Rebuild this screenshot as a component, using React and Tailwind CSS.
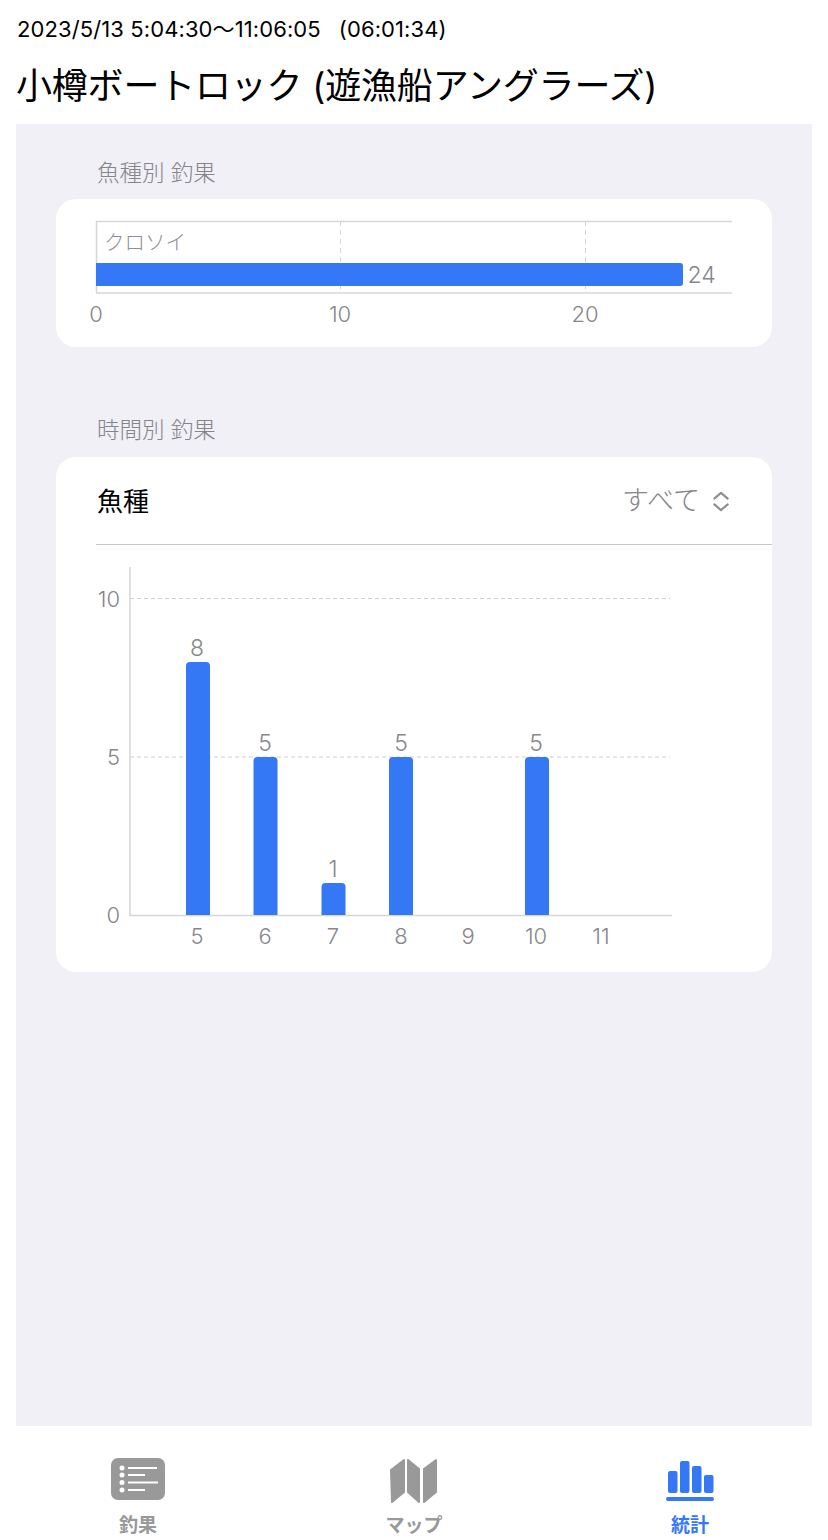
const blue = '#3478f6'
const gray = '#86868b'
const font = 'Inter, "Noto Sans CJK JP", sans-serif'

function SpeciesChart() {
  return (
    <svg viewBox="56 199 716 148" className="block h-[148px] w-full" style={{ fontFamily: font }}>
      <path d="M96 221.5H732M96 293H732" stroke="#d6d6d8" strokeWidth="1.5" fill="none" />
      <path d="M96.5 221V293" stroke="#d6d6d8" strokeWidth="1.5" fill="none" />
      <path d="M340.5 221V293M585.5 221V293" stroke="#d6d6d8" strokeWidth="1" strokeDasharray="5 4" fill="none" />
      <path d="M96 263H680a3 3 0 0 1 3 3V283a3 3 0 0 1 -3 3H96Z" fill={blue} />
      <text x="104" y="250" fontSize="20.5" fontWeight="300" fill="#8e8e93">クロソイ</text>
      <text x="687.5" y="283" fontSize="23" fontWeight="300" fill={gray}>24</text>
      {[[96, '0'], [340, '10'], [585, '20']].map(([x, t]) => (
        <text key={t} x={x} y="322" fontSize="22" fontWeight="300" fill={gray} textAnchor="middle">{t}</text>
      ))}
    </svg>
  )
}

const bars = [
  { x: 198, labelX: 197, top: 662, label: '8' },
  { x: 265.5, labelX: 265, top: 757, label: '5' },
  { x: 333.5, labelX: 333, top: 883, label: '1' },
  { x: 401, labelX: 401, top: 757, label: '5' },
  { x: 537, labelX: 536, top: 757, label: '5' },
]

const hours = [[197, '5'], [265, '6'], [333, '7'], [401, '8'], [468, '9'], [536, '10'], [601, '11']]

function HourChart() {
  return (
    <svg viewBox="56 545 716 427" className="block h-[427px] w-full" style={{ fontFamily: font }}>
      <path d="M130 598.5H670M130 757H670" stroke="#cfcfd2" strokeWidth="1" strokeDasharray="4 3" fill="none" />
      <path d="M130 567V915.5H672" stroke="#d6d6d8" strokeWidth="1.5" fill="none" />
      {bars.map((b) => (
        <g key={b.x}>
          <path
            d={`M${b.x - 12} 915V${b.top + 4}a4 4 0 0 1 4 -4H${b.x + 8}a4 4 0 0 1 4 4V915Z`}
            fill={blue}
          />
          <text x={b.labelX} y={b.top - 6} fontSize="23" fontWeight="300" fill={gray} textAnchor="middle">{b.label}</text>
        </g>
      ))}
      {[[607, '10'], [765, '5'], [923, '0']].map(([y, t]) => (
        <text key={t} x="120" y={y} fontSize="22" fontWeight="300" fill={gray} textAnchor="end">{t}</text>
      ))}
      {hours.map(([x, t]) => (
        <text key={t} x={x} y="944" fontSize="22" fontWeight="300" fill={gray} textAnchor="middle">{t}</text>
      ))}
    </svg>
  )
}

function ListIcon() {
  return (
    <svg viewBox="111 1458 54 42" className="h-[42px] w-[54px]">
      <rect x="111" y="1458" width="54" height="42" rx="7" fill="#999999" />
      <g fill="#fff">
        <circle cx="122" cy="1468" r="2.5" />
        <circle cx="122" cy="1475" r="2.5" />
        <circle cx="122" cy="1482.5" r="2.5" />
        <circle cx="122" cy="1490" r="2.5" />
      </g>
      <path d="M128 1468H157M128 1475H145M128 1482.5H158M128 1490H145" stroke="#fff" strokeWidth="2" fill="none" />
    </svg>
  )
}

function MapIcon() {
  return (
    <svg viewBox="390 1457 48 45" className="h-[45px] w-[48px]">
      <g fill="#999999" stroke="#999999" strokeWidth="2" strokeLinejoin="round">
        <path d="M391 1469L404 1459V1491L392 1501Z" />
        <path d="M408 1459L419 1468V1501L408 1491Z" />
        <path d="M424 1468L436 1459V1491L424 1501Z" />
      </g>
    </svg>
  )
}

function StatsIcon() {
  return (
    <svg viewBox="665 1458 48 44" className="h-[44px] w-[48px]">
      <g fill={blue}>
        <rect x="667" y="1471" width="9.5" height="22" rx="2" />
        <rect x="679" y="1461" width="9.5" height="32" rx="2" />
        <rect x="691" y="1466" width="9.5" height="27" rx="2" />
        <rect x="703" y="1475" width="9.5" height="18" rx="2" />
        <rect x="665" y="1497" width="48" height="4" rx="2" />
      </g>
    </svg>
  )
}

function Tab({ icon, label, active }) {
  return (
    <div className="flex flex-col items-center">
      <div className="flex h-[46px] items-start">{icon}</div>
      <div className={`mt-[9px] text-[19px] leading-[26px] font-semibold ${active ? 'text-[#3478f6]' : 'text-[#999999]'}`}>
        {label}
      </div>
    </div>
  )
}

export default function App() {
  return (
    <div className="flex h-[1540px] w-[828px] flex-col overflow-hidden bg-white" style={{ fontFamily: font }}>
      <header className="h-[124px] shrink-0 px-4 pt-[17px]">
        <div className="flex pl-px text-[22px] leading-[24px] tracking-[0.1px] text-black">
          <span>2023/5/13 5:04:30〜11:06:05</span>
          <span className="ml-[18px]">(06:01:34)</span>
        </div>
        <h1 className="mt-[23px] text-[36px] leading-[44px] font-normal tracking-[-0.2px] text-black">小樽ボートロック (遊漁船アングラーズ)</h1>
      </header>

      <main className="mx-4 flex-1 bg-[#f0f0f6] px-10 pt-[36px]">
        <h2 className="pl-[41px] text-[22.5px] leading-[26px] font-light text-[#85858a]">魚種別 釣果</h2>
        <section className="mt-[13px] overflow-hidden rounded-[20px] bg-white">
          <SpeciesChart />
        </section>

        <h2 className="mt-[70px] pl-[41px] text-[22.5px] leading-[26px] font-light text-[#85858a]">時間別 釣果</h2>
        <section className="mt-[14px] overflow-hidden rounded-[20px] bg-white">
          <div className="ml-10 flex h-[88px] items-center justify-between border-b border-[#c6c6c8] pt-[2px] pr-[42px]">
            <span className="pl-px text-[26px] text-black">魚種</span>
            <span className="flex items-center gap-[12px] text-[27px] font-light text-[#85858a]">
              すべて
              <svg viewBox="0 0 18 24" className="h-[23px] w-[18px]" fill="none" stroke="#8e8e93" strokeWidth="2.2" strokeLinecap="round" strokeLinejoin="round">
                <path d="M2 9L9 3L16 9M2 15L9 21L16 15" />
              </svg>
            </span>
          </div>
          <HourChart />
        </section>
      </main>

      <nav className="grid h-[114px] shrink-0 grid-cols-3 bg-white pt-[32px]">
        <Tab icon={<ListIcon />} label="釣果" />
        <Tab icon={<MapIcon />} label="マップ" />
        <Tab icon={<StatsIcon />} label="統計" active />
      </nav>
    </div>
  )
}
